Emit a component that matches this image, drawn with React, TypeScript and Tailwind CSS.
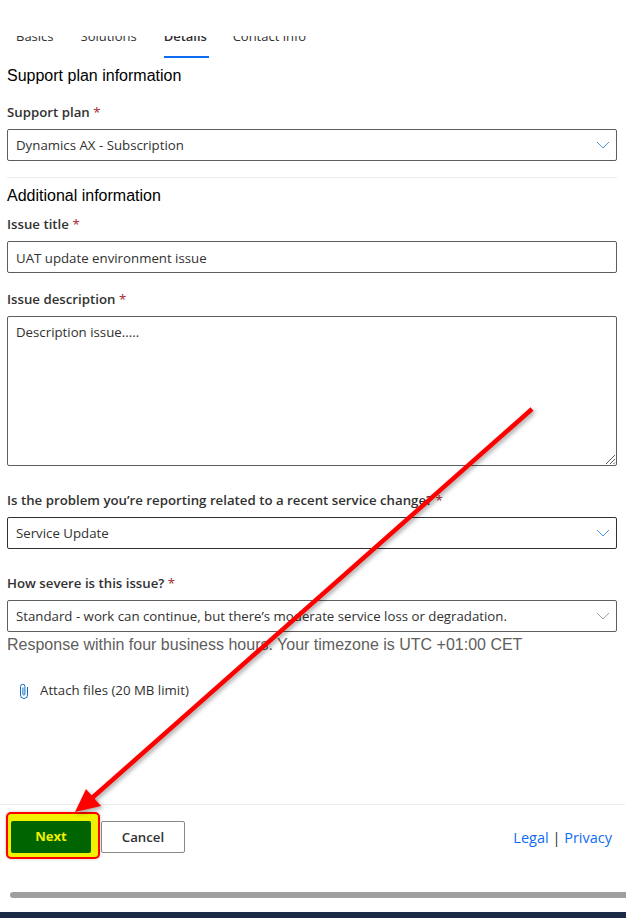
import React from 'react';

const sans = "font-['Open_Sans','Noto_Sans',sans-serif]";

const Chevron = ({ color = '#4a98d8' }: { color?: string }) => (
  <svg width="14" height="8" viewBox="0 0 14 8" fill="none" aria-hidden="true">
    <path d="M1 1l6 6 6-6" stroke={color} strokeWidth="1" />
  </svg>
);

const Label = ({ children }: { children: React.ReactNode }) => (
  <div className="text-[13.25px] leading-[18px] font-semibold text-[#323130]">
    {children} <span className="font-normal text-[#a4262c]">*</span>
  </div>
);

const Select = ({ value, border = 'border-[#605e5c]', chevron }: { value: string; border?: string; chevron?: string }) => (
  <div className={`flex h-8 items-center justify-between rounded-[2px] border ${border} pl-2 pr-[6px] text-[13.25px] text-[#323130]`}>
    <span className="pt-[1px]">{value}</span>
    <Chevron color={chevron} />
  </div>
);

export default function App() {
  return (
    <div className={`relative flex h-[918px] w-[626px] flex-col overflow-hidden bg-white ${sans}`}>
      {/* Tabs, cut off at the top */}
      <div className="mt-[36px] flex h-[22px] items-start overflow-hidden pl-[16px] text-[13px] text-[#323130]">
        <div className="flex gap-[27px]">
          <div className="-mt-[7px] h-[29px] leading-[14px]">Basics</div>
          <div className="-mt-[7px] h-[29px] leading-[14px]">Solutions</div>
          <div className="-mt-[7px] flex h-[29px] w-[45px] flex-col justify-between font-semibold leading-[14px]">
            <span>Details</span>
            <span className="h-[2px] bg-[#0f6cf0]" />
          </div>
          <div className="-mt-[7px] -ml-[3px] h-[29px] leading-[14px]">Contact info</div>
        </div>
      </div>

      <div className="flex flex-1 flex-col px-[7px]">
        <h2 className="mt-[8px] font-['Liberation_Sans',sans-serif] text-[16px] leading-[20px] text-black">Support plan information</h2>
        <div className="mt-[17px]"><Label>Support plan</Label></div>
        <div className="mt-[8px] mr-[2px]"><Select value="Dynamics AX - Subscription" /></div>
        <div className="mt-[16px] mr-[2px] h-px bg-[#edebe9]" />

        <h2 className="mt-[8px] font-['Liberation_Sans',sans-serif] text-[16px] leading-[20px] text-black">Additional information</h2>
        <div className="mt-[9px]"><Label>Issue title</Label></div>
        <div className="mt-[8px] mr-[2px] flex h-8 items-center rounded-[2px] border border-[#605e5c] pl-2 pt-[3px] text-[13.25px] text-[#323130]">UAT update environment issue</div>

        <div className="mt-[17px]"><Label>Issue description</Label></div>
        <div className="relative mt-[8px] mr-[2px] h-[150px] rounded-[2px] border border-[#605e5c] px-2 py-[6px] text-[13.25px] leading-[18px] text-[#323130]">
          Description issue.....
          <svg className="absolute bottom-0 right-0" width="12" height="12" viewBox="0 0 12 12" aria-hidden="true">
            <path d="M2 11l9-9M6 11l5-5M9.5 11l1.5-1.5" stroke="#605e5c" strokeWidth="1" />
          </svg>
        </div>

        <div className="mt-[25px]"><Label>Is the problem you’re reporting related to a recent service change?</Label></div>
        <div className="mt-[8px] mr-[2px]"><Select value="Service Update" border="border-[#323130]" /></div>

        <div className="mt-[25px]"><Label>How severe is this issue?</Label></div>
        <div className="mt-[8px] mr-[2px]">
          <Select value="Standard - work can continue, but there’s moderate service loss or degradation." chevron="#a19f9d" />
        </div>
        <p className="mt-[3px] font-['Liberation_Sans',sans-serif] text-[16px] leading-[20px] text-[#605e5c]">Response within four business hours. Your timezone is UTC +01:00 CET</p>

        <div className="mt-[26px] flex items-center pl-[11px] text-[13.25px] text-[#323130]">
          <svg width="12" height="16" viewBox="0 0 12 16" fill="none" aria-hidden="true">
            <path d="M9.5 4v8a3.5 3.5 0 0 1-7 0V3.5a2.2 2.2 0 0 1 4.4 0V11a1 1 0 0 1-2 0V4.5" stroke="#0f6cbd" strokeWidth="1" />
          </svg>
          <span className="ml-[10px]">Attach files (20 MB limit)</span>
        </div>
      </div>

      {/* Footer actions */}
      <div className="mr-[1px] flex h-[88px] shrink-0 items-start border-t border-[#edebe9] pl-[6px] pr-[13px]">
        <div className="mt-[7px] flex h-[47px] w-[94px] items-center rounded-[5px] border-2 border-[#ff0000] bg-[#f0f000] pl-[3px] shadow-[0_0_3px_rgba(0,0,0,0.25)]">
          <div className="mt-[2px] flex h-[32px] w-[80px] items-center justify-center rounded-[2px] bg-[#006400] pt-[1px] text-[13px] font-bold text-[#f0f000]">Next</div>
        </div>
        <button className="ml-[1px] mt-[16px] h-8 w-[84px] rounded-[2px] border border-[#8a8886] pt-[1px] text-[13.25px] font-semibold text-[#323130]">Cancel</button>
        <div className="ml-auto mt-[23px] text-[14.5px] leading-[20px] text-[#323130]">
          <span className="text-[#0f6cf0]">Legal</span> | <span className="text-[#0f6cf0]">Privacy</span>
        </div>
      </div>

      {/* Scrollbar */}
      <div className="ml-[10px] h-[6px] shrink-0 rounded-l-[3px] bg-[#a19f9d]" />
      <div className="mt-[14px] h-[6px] shrink-0 bg-[#1b2a47]" />

      {/* Red annotation arrow */}
      <svg className="pointer-events-none absolute left-0 top-0 drop-shadow-[2px_2px_2px_rgba(0,0,0,0.35)]" width="626" height="918" viewBox="0 0 626 918" fill="none" aria-hidden="true">
        <path d="M532 409L92 798" stroke="#ff0000" strokeWidth="4.5" />
        <path d="M75 812l11-23 15 17z" fill="#ff0000" />
      </svg>
    </div>
  );
}
